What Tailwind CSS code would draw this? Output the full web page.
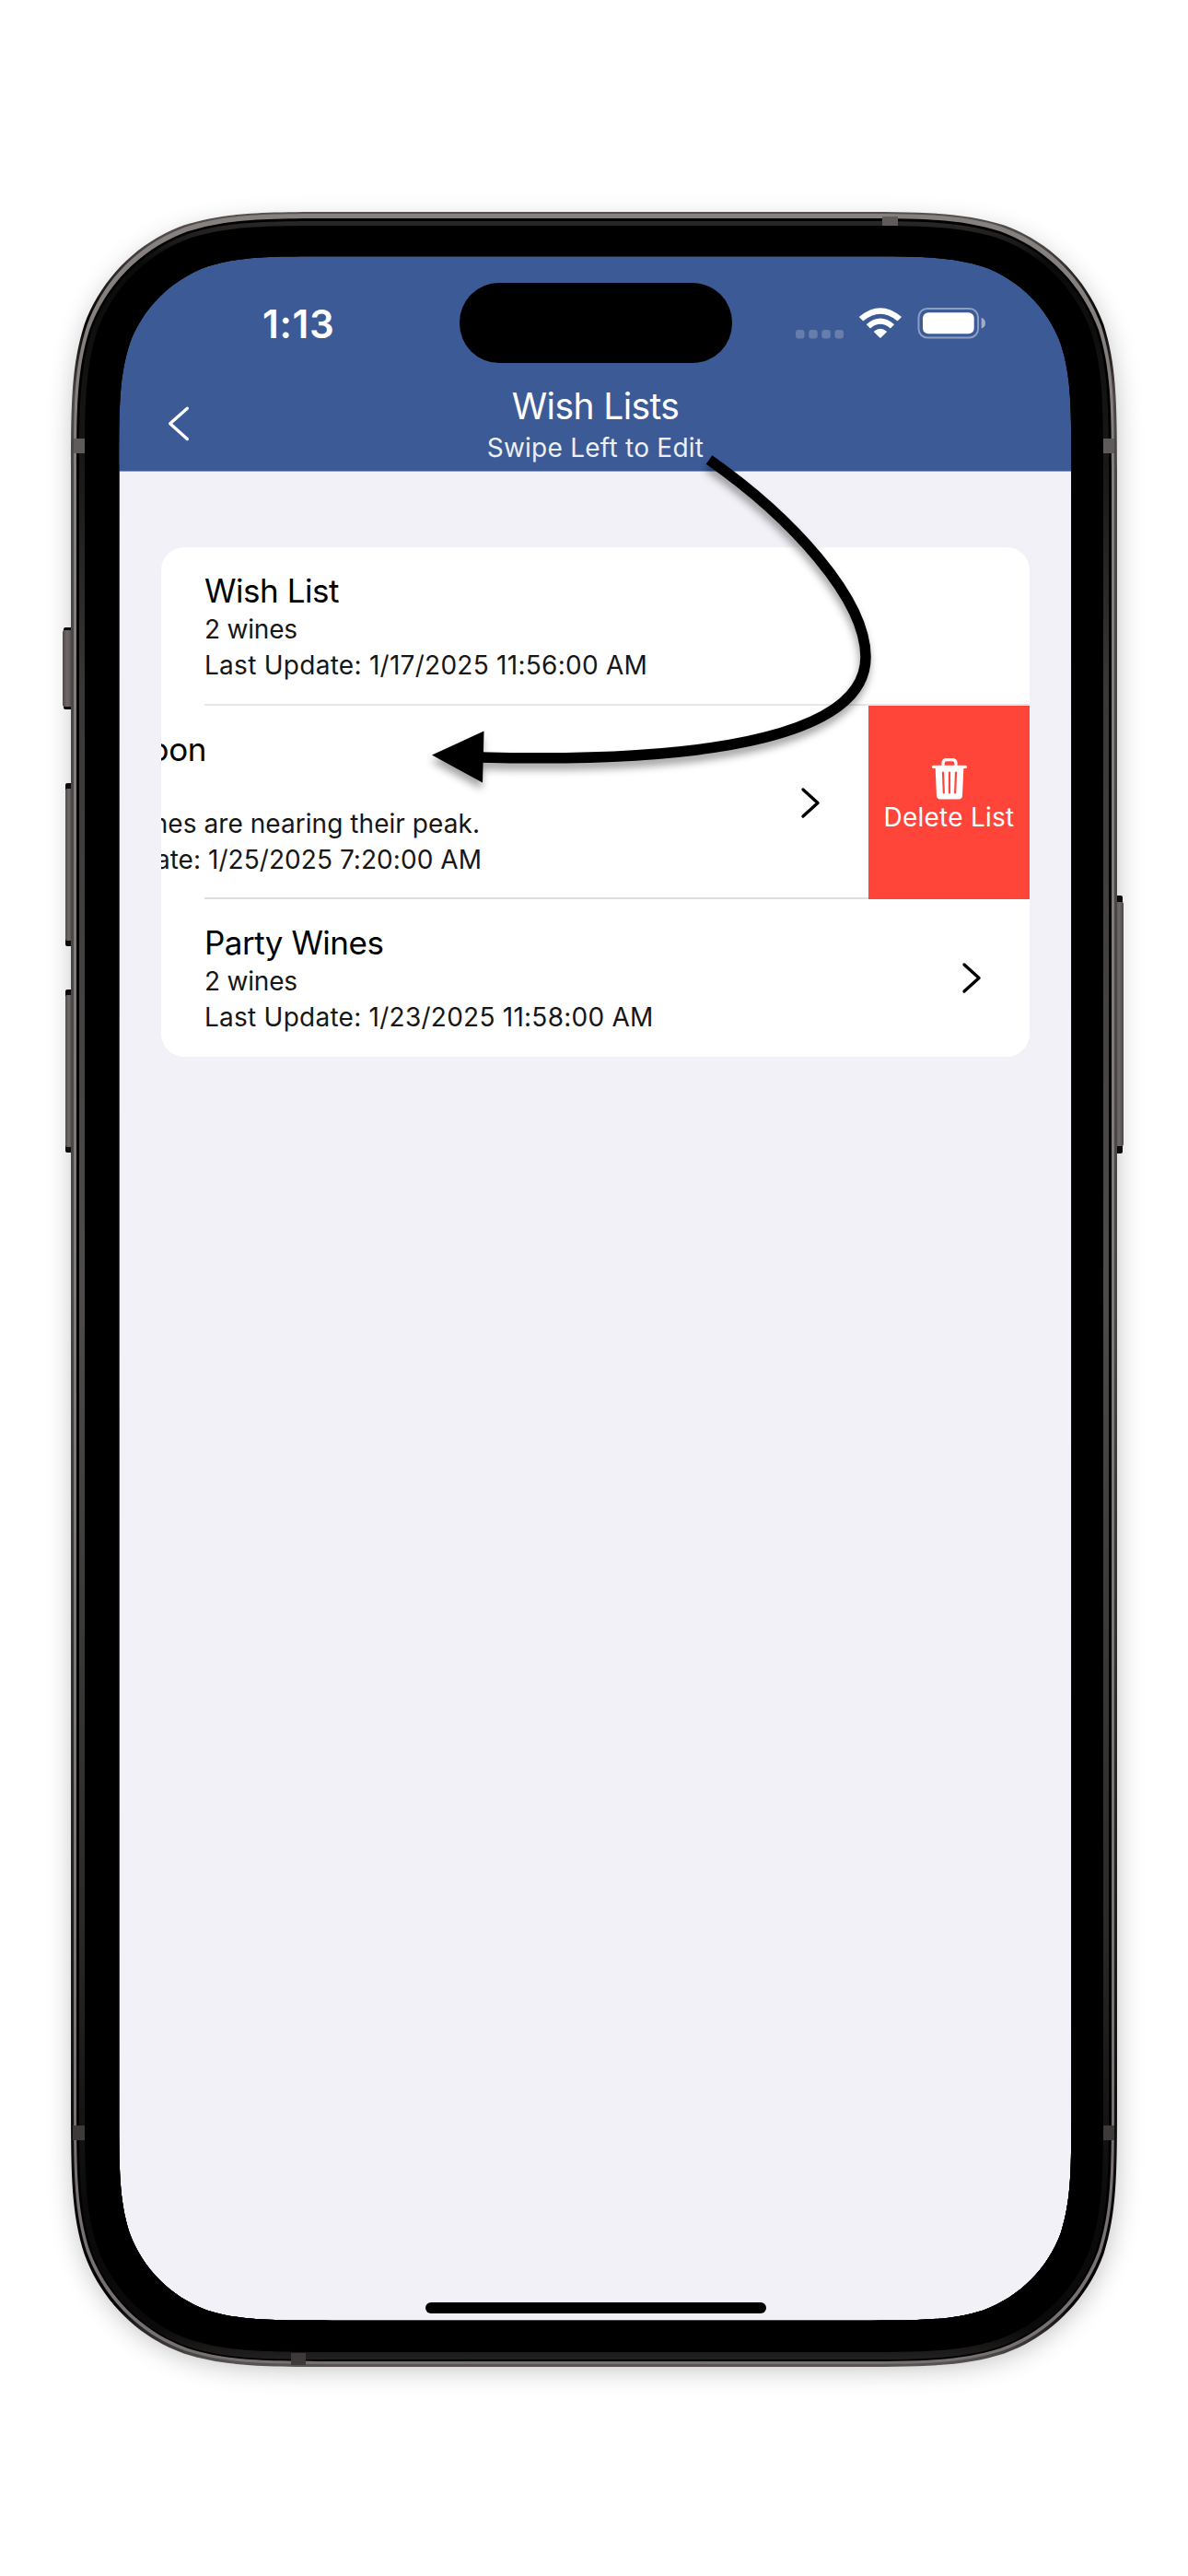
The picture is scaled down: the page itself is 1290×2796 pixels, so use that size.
<!DOCTYPE html>
<html lang="en">
<head>
<meta charset="utf-8">
<title>Wish Lists</title>
<script src="https://cdn.jsdelivr.net/npm/@tailwindcss/browser@4"></script>
</head>
<body class="bg-white font-['Inter',sans-serif]">
<div class="relative w-[1290px] h-[2796px] overflow-hidden px-[129px] pt-[278px]">

  <!-- device body: shadow and side buttons -->
  <svg class="absolute inset-0" width="1290" height="2796" viewBox="0 0 1290 2796">
    <defs>
      <filter id="soft" x="-10%" y="-10%" width="120%" height="120%"><feGaussianBlur stdDeviation="15"/></filter>
      <linearGradient id="btn" x1="0" x2="1" y1="0" y2="0"><stop offset="0" stop-color="#4f4b4a"/><stop offset=".45" stop-color="#6f6a68"/><stop offset="1" stop-color="#4b4746"/></linearGradient>
    </defs>
    <path data-squircle="80,242,1132,2328,190" fill="#000" opacity=".26" filter="url(#soft)"/>
    <g fill="#0b0b0b">
      <rect x="69" y="681" width="10" height="89" rx="2"/>
      <rect x="71" y="850" width="8" height="177" rx="2"/>
      <rect x="71" y="1074" width="8" height="177" rx="2"/>
      <rect x="1211" y="972" width="8" height="280" rx="2"/>
    </g>
    <g fill="url(#btn)">
      <rect x="68" y="684" width="11" height="83" rx="2"/>
      <rect x="71" y="856" width="8" height="165" rx="2"/>
      <rect x="71" y="1080" width="8" height="165" rx="2"/>
      <rect x="1211" y="979" width="9" height="265" rx="2"/>
    </g>
  </svg>

  <!-- screen -->
  <main class="relative w-[1035px] h-[2241px] rounded-[120px] overflow-hidden bg-[#f2f1f7] flex flex-col">
    <header class="h-[234px] shrink-0 bg-[#3c5a96] text-white flex flex-col border-b border-[#8c9cc0]">
      <div class="h-[146px] pt-[29px] grid grid-cols-[370px_296px_1fr]">
        <div class="pl-[156px] pt-[20px] text-[42px] leading-[50px] tracking-[0.7px] font-semibold whitespace-nowrap">1:13</div>
        <div class="h-[87px] rounded-[43px] bg-black"></div>
        <div class="flex items-start pt-[27px] pl-[69px]">
          <svg width="210" height="35" viewBox="864 334 210 35" fill="#fff">
            <g opacity=".22">
              <rect x="864" y="358" width="9.5" height="9.5" rx="3.2"/><rect x="878.2" y="358" width="9.5" height="9.5" rx="3.2"/><rect x="892.3" y="358" width="9.5" height="9.5" rx="3.2"/><rect x="906.5" y="358" width="9.5" height="9.5" rx="3.2"/>
            </g>
            <path d="M933.4 343.6Q955.9 324.9 978.4 343.6Q979 344.2 978.4 344.8L975 348Q974.5 348.5 973.8 348Q955.9 333.6 938 348Q937.3 348.5 936.8 348L933.4 344.8Q932.8 344.2 933.4 343.6Z"/>
            <path d="M941.2 351.7Q955.9 339.4 970.6 351.7Q971.1 352.2 970.6 352.7L967.3 355.9Q966.8 356.4 966.2 355.9Q955.9 347.8 945.6 355.9Q945 356.4 944.5 355.9L941.2 352.7Q940.7 352.2 941.2 351.7Z"/>
            <path d="M949.2 359.5Q955.9 353.9 962.6 359.5Q963.2 360 962.7 360.5L956.5 366.5Q955.9 367.1 955.3 366.5L949.1 360.5Q948.6 360 949.2 359.5Z"/>
            <rect x="997.5" y="335" width="64.6" height="31.6" rx="9.5" fill="none" stroke="#fff" stroke-width="2" opacity=".42"/>
            <rect x="1002" y="339.3" width="55.7" height="23" rx="6"/>
            <path d="M1065.6 344.8Q1070 346.5 1070 350.7Q1070 355 1065.6 356.6Z" opacity=".5"/>
          </svg>
        </div>
      </div>
      <div class="grid grid-cols-[200px_1fr_200px]">
        <svg class="mt-[14px] ml-[50px]" width="32" height="44" viewBox="179 438 32 44" fill="none" stroke="#fff" stroke-width="3.4" stroke-linecap="round" stroke-linejoin="round"><path d="M203.3 443.2L184.7 459.7L203.3 476.5"/></svg>
        <div class="text-center">
          <h1 class="text-[39px] leading-[46px] tracking-[-0.6px] -mt-[6px]">Wish Lists</h1>
          <p class="text-[28px] leading-[40px] tracking-[0.25px] text-white/90 mt-[2px]">Swipe Left to Edit</p>
        </div>
      </div>
    </header>

    <section class="mt-[82px] ml-[46px] w-[943px] h-[553px] rounded-[25px] bg-white overflow-hidden flex flex-col text-[28px] leading-[39px] text-[#161616] whitespace-nowrap">
      <article class="h-[172px] pl-[47px] flex">
        <div class="flex-1 border-b-2 border-[#e6e6e6] pt-[24px]">
          <h2 class="text-[35px] leading-[46px] tracking-[-0.47px] text-black">Wish List</h2>
          <p class="tracking-[-0.2px]">2 wines</p>
          <p class="tracking-[0.27px]">Last Update: 1/17/2025 11:56:00 AM</p>
        </div>
      </article>
      <article class="h-[210px] flex">
        <div class="w-[768px] flex">
          <div class="w-[350px] pt-[24px] overflow-hidden shrink-0">
            <h2 class="w-[49px] flex justify-end text-[35px] leading-[46px] tracking-[-0.4px] text-black">Soon</h2>
            <p class="w-[346px] mt-[39px] flex justify-end tracking-[0.05px]">wines are nearing their peak.</p>
            <p class="w-[348px] flex justify-end leading-[38px] tracking-[0.05px]">Last Update: 1/25/2025 7:20:00 AM</p>
          </div>
          <svg class="ml-[343px] mt-[86px]" width="24" height="40" viewBox="0 0 24 40" fill="none" stroke="#000" stroke-width="3.4" stroke-linecap="round" stroke-linejoin="round"><path d="M4 5L20 19.5L4 34"/></svg>
        </div>
        <button class="w-[175px] bg-[#ff453a] text-white flex flex-col items-center pt-[56px]">
          <svg width="40" height="46" viewBox="0 0 40 46">
            <path fill="none" stroke="#fff" stroke-width="3.2" stroke-linecap="round" d="M2.5 10.3H37.5M13 9.5V6.5Q13 2.6 17 2.6H23Q27 2.6 27 6.5V9.5"/>
            <path fill="#fff" d="M4.6 10.3H35.4L34 41.5Q33.8 45.5 30 45.5H10Q6.2 45.5 6 41.5Z"/>
            <path stroke="#ff453a" stroke-width="2.2" stroke-linecap="round" d="M13 16.5L13.8 38.5M20 16.5V38.5M27 16.5L26.2 38.5"/>
          </svg>
          <span class="leading-[38px] tracking-[0.25px]">Delete List</span>
        </button>
      </article>
      <article class="relative h-[171px] pl-[47px] pt-[24px] flex">
        <div class="absolute left-[47px] -top-[2px] w-[721px] h-[2px] bg-[#dedede]"></div>
        <div class="flex-1">
          <h2 class="text-[35px] leading-[46px] tracking-[-0.5px] text-black">Party Wines</h2>
          <p class="tracking-[-0.2px]">2 wines</p>
          <p class="tracking-[0.25px]">Last Update: 1/23/2025 11:58:00 AM</p>
        </div>
        <svg class="mr-[51px] mt-[42px]" width="24" height="40" viewBox="0 0 24 40" fill="none" stroke="#000" stroke-width="3.4" stroke-linecap="round" stroke-linejoin="round"><path d="M4 5L20 19.5L4 34"/></svg>
      </article>
    </section>

    <div class="mt-auto mb-[8px] ml-[333px] w-[370px] h-[12px] rounded-full bg-black"></div>
  </main>

  <!-- bezel ring and swipe hint arrow, above the screen -->
  <svg class="absolute inset-0" width="1290" height="2796" viewBox="0 0 1290 2796">
    <defs>
      <linearGradient id="edge" x1="0" x2="0" y1="0" y2="1"><stop offset="0" stop-color="#55514f"/><stop offset=".015" stop-color="#4a4645"/><stop offset=".05" stop-color="#000"/><stop offset=".085" stop-color="#4b4746"/><stop offset=".5" stop-color="#4a4746"/><stop offset=".85" stop-color="#161514"/><stop offset=".97" stop-color="#000"/><stop offset="1" stop-color="#5a5655"/></linearGradient>
      <linearGradient id="rim" x1="0" x2="0" y1="0" y2="1"><stop offset="0" stop-color="#86817f"/><stop offset="1" stop-color="#767170"/></linearGradient>
      <linearGradient id="strip" x1="0" x2="0" y1="0" y2="1"><stop offset="0" stop-color="#2a2827"/><stop offset=".006" stop-color="#222020"/><stop offset=".02" stop-color="#0a0a0a"/><stop offset=".12" stop-color="#1a1918"/><stop offset=".22" stop-color="#3a3837"/><stop offset=".5" stop-color="#4e4b4a"/><stop offset=".8" stop-color="#2b2928"/><stop offset=".93" stop-color="#0a0a0a"/><stop offset=".985" stop-color="#0a0a0a"/><stop offset="1" stop-color="#232120"/></linearGradient>
      <filter id="drop" x="-10%" y="-10%" width="120%" height="125%"><feDropShadow dx="-1" dy="7" stdDeviation="4" flood-color="#000" flood-opacity=".36"/></filter>
    </defs>
    <g fill-rule="evenodd">
      <path data-squircle="77,230,1136,2339,194" data-hole fill="url(#edge)"/>
      <path data-squircle="80,232,1130,2334,192" data-hole fill="url(#rim)"/>
      <path data-squircle="83,237,1124,2326,191" data-hole fill="#000"/>
      <path data-squircle="86,240,1118,2321,187" data-hole fill="url(#strip)"/>
      <path data-squircle="92,245,1106,2308,181" data-hole fill="#000"/>
    </g>
    <g fill="#5f5b5a">
      <rect x="958" y="235" width="17" height="10"/><rect x="80" y="476" width="12" height="16"/><rect x="1198" y="476" width="12" height="16"/>
    </g>
    <g fill="#3d3a39">
      <rect x="79" y="2307" width="13" height="16"/><rect x="1198" y="2307" width="12" height="16"/><rect x="316" y="2554" width="16" height="13"/>
    </g>
    <g filter="url(#drop)">
      <path fill="none" stroke="#000" stroke-width="11.5" d="M770 499C860 562 940 650 940 713C940 793 790 829 522 822"/>
      <path d="M469 819.5L525.5 793.5L524 849.5Z"/>
    </g>
  </svg>
</div>
<script>
  // continuous-curvature rounded rectangle
  function squircle(x, y, w, h, r) {
    const a = 1.528665 * r, b = 1.088493 * r, c = .868407 * r, d = .631494 * r,
          e = .074911 * r, f = .372824 * r, g = .16906 * r, X = x + w, Y = y + h;
    return `M${x+a} ${y}H${X-a}C${X-b} ${y} ${X-c} ${y} ${X-d} ${y+e}C${X-f} ${y+g} ${X-g} ${y+f} ${X-e} ${y+d}C${X} ${y+c} ${X} ${y+b} ${X} ${y+a}` +
      `V${Y-a}C${X} ${Y-b} ${X} ${Y-c} ${X-e} ${Y-d}C${X-g} ${Y-f} ${X-f} ${Y-g} ${X-d} ${Y-e}C${X-c} ${Y} ${X-b} ${Y} ${X-a} ${Y}` +
      `H${x+a}C${x+b} ${Y} ${x+c} ${Y} ${x+d} ${Y-e}C${x+f} ${Y-g} ${x+g} ${Y-f} ${x+e} ${Y-d}C${x} ${Y-c} ${x} ${Y-b} ${x} ${Y-a}` +
      `V${y+a}C${x} ${y+b} ${x} ${y+c} ${x+e} ${y+d}C${x+g} ${y+f} ${x+f} ${y+g} ${x+d} ${y+e}C${x+c} ${y} ${x+b} ${y} ${x+a} ${y}Z`;
  }
  document.querySelectorAll('[data-squircle]').forEach(p => {
    const hole = p.hasAttribute('data-hole') ? squircle(129.3, 278.3, 1034, 2240.4, 151) : '';
    p.setAttribute('d', squircle(...p.dataset.squircle.split(',').map(Number)) + hole);
  });
</script>
</body>
</html>
